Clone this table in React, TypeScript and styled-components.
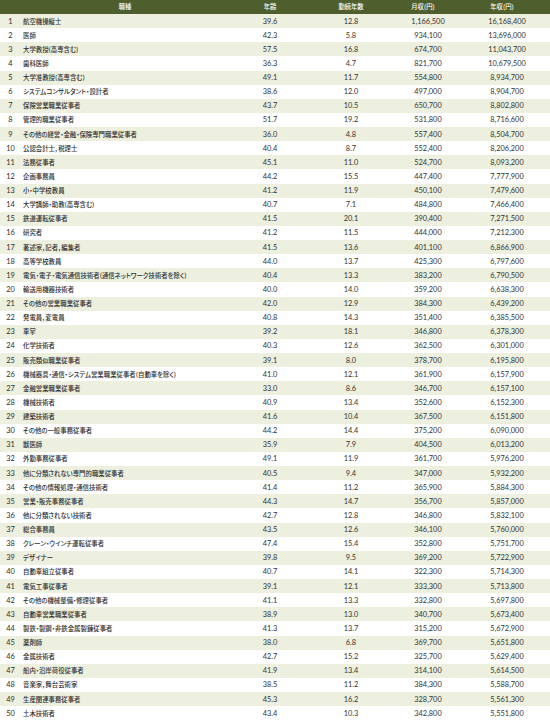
import React from "react";
import styled, { createGlobalStyle } from "styled-components";

const GlobalStyle = createGlobalStyle`
  html, body {
    margin: 0;
    padding: 0;
    background: #ffffff;
  }
  body {
    font-family: Lato, "Noto Sans CJK JP", sans-serif;
    color: #333333;
  }
`;

type Job = [string, string, string, string, string];

const jobs: Job[] = [
  ["航空機操縦士", "39.6", "12.8", "1,166,500", "16,168,400"],
  ["医師", "42.3", "5.8", "934,100", "13,696,000"],
  ["大学教授(高専含む)", "57.5", "16.8", "674,700", "11,043,700"],
  ["歯科医師", "36.3", "4.7", "821,700", "10,679,500"],
  ["大学准教授(高専含む)", "49.1", "11.7", "554,800", "8,934,700"],
  ["システムコンサルタント・設計者", "38.6", "12.0", "497,000", "8,904,700"],
  ["保険営業職業従事者", "43.7", "10.5", "650,700", "8,802,800"],
  ["管理的職業従事者", "51.7", "19.2", "531,800", "8,716,600"],
  ["その他の経営・金融・保険専門職業従事者", "36.0", "4.8", "557,400", "8,504,700"],
  ["公認会計士，税理士", "40.4", "8.7", "552,400", "8,206,200"],
  ["法務従事者", "45.1", "11.0", "524,700", "8,093,200"],
  ["企画事務員", "44.2", "15.5", "447,400", "7,777,900"],
  ["小・中学校教員", "41.2", "11.9", "450,100", "7,479,600"],
  ["大学講師・助教(高専含む)", "40.7", "7.1", "484,800", "7,466,400"],
  ["鉄道運転従事者", "41.5", "20.1", "390,400", "7,271,500"],
  ["研究者", "41.2", "11.5", "444,000", "7,212,300"],
  ["著述家，記者，編集者", "41.5", "13.6", "401,100", "6,866,900"],
  ["高等学校教員", "44.0", "13.7", "425,300", "6,797,600"],
  ["電気・電子・電気通信技術者(通信ネットワーク技術者を除く)", "40.4", "13.3", "383,200", "6,790,500"],
  ["輸送用機器技術者", "40.0", "14.0", "359,200", "6,638,300"],
  ["その他の営業職業従事者", "42.0", "12.9", "384,300", "6,439,200"],
  ["発電員，変電員", "40.8", "14.3", "351,400", "6,385,500"],
  ["車掌", "39.2", "18.1", "346,800", "6,378,300"],
  ["化学技術者", "40.3", "12.6", "362,500", "6,301,000"],
  ["販売類似職業従事者", "39.1", "8.0", "378,700", "6,195,800"],
  ["機械器具・通信・システム営業職業従事者(自動車を除く)", "41.0", "12.1", "361,900", "6,157,900"],
  ["金融営業職業従事者", "33.0", "8.6", "346,700", "6,157,100"],
  ["機械技術者", "40.9", "13.4", "352,600", "6,152,300"],
  ["建築技術者", "41.6", "10.4", "367,500", "6,151,800"],
  ["その他の一般事務従事者", "44.2", "14.4", "375,200", "6,090,000"],
  ["獣医師", "35.9", "7.9", "404,500", "6,013,200"],
  ["外勤事務従事者", "49.1", "11.9", "361,700", "5,976,200"],
  ["他に分類されない専門的職業従事者", "40.5", "9.4", "347,000", "5,932,200"],
  ["その他の情報処理・通信技術者", "41.4", "11.2", "365,900", "5,884,300"],
  ["営業・販売事務従事者", "44.3", "14.7", "356,700", "5,857,000"],
  ["他に分類されない技術者", "42.7", "12.8", "346,800", "5,832,100"],
  ["総合事務員", "43.5", "12.6", "346,100", "5,760,000"],
  ["クレーン・ウインチ運転従事者", "47.4", "15.4", "352,800", "5,751,700"],
  ["デザイナー", "39.8", "9.5", "369,200", "5,722,900"],
  ["自動車組立従事者", "40.7", "14.1", "322,300", "5,714,300"],
  ["電気工事従事者", "39.1", "12.1", "333,300", "5,713,800"],
  ["その他の機械整備・修理従事者", "41.1", "13.3", "332,800", "5,697,800"],
  ["自動車営業職業従事者", "38.9", "13.0", "340,700", "5,673,400"],
  ["製鉄・製鋼・非鉄金属製錬従事者", "41.3", "13.7", "315,200", "5,672,900"],
  ["薬剤師", "38.0", "6.8", "369,700", "5,651,800"],
  ["金属技術者", "42.7", "15.2", "325,700", "5,629,400"],
  ["船内・沿岸荷役従事者", "41.9", "13.4", "314,100", "5,614,500"],
  ["音楽家，舞台芸術家", "38.5", "11.2", "384,300", "5,588,700"],
  ["生産関連事務従事者", "45.3", "16.2", "328,700", "5,561,300"],
  ["土木技術者", "43.4", "10.3", "342,800", "5,551,800"],
];

const columns = "21px 209px 80px 82px 72px 86px";

const Table = styled.div`
  width: 550px;
  border-bottom: 1px solid #d4d6cc;
`;

const HeaderRow = styled.div`
  display: grid;
  grid-template-columns: ${columns};
  height: 14px;
  background: #4e5e2c;
  color: #ffffff;
  align-items: center;
`;

const HeadCell = styled.div<{ $span?: number; $shift?: number }>`
  grid-column: span ${(p) => p.$span ?? 1};
  text-align: center;
  font-family: "Noto Sans CJK JP", sans-serif;
  font-weight: 500;
  font-feature-settings: "palt";
  font-size: 6.3px;
  line-height: 14px;
  padding-left: ${(p) => (p.$shift && p.$shift > 0 ? p.$shift : 0)}px;
  padding-right: ${(p) => (p.$shift && p.$shift < 0 ? -p.$shift : 0)}px;
`;

const Row = styled.div<{ $tinted: boolean }>`
  display: grid;
  grid-template-columns: ${columns};
  height: 14.14px;
  align-items: center;
  background: ${(p) => (p.$tinted ? "#edf0df" : "#ffffff")};
`;

const RankCell = styled.div`
  text-align: center;
  font-family: Lato, sans-serif;
  font-size: 7.4px;
  color: #2e2e2e;
`;

const NameCell = styled.div`
  padding-left: 2px;
  font-family: "Noto Sans CJK JP", sans-serif;
  font-weight: 500;
  font-feature-settings: "palt";
  font-size: 6.4px;
  color: #2e2e2e;
  white-space: nowrap;
`;

const NumCell = styled.div`
  text-align: center;
  font-family: Lato, sans-serif;
  font-size: 7.4px;
  color: #333333;
`;

const App: React.FC = () => {
  return (
    <>
      <GlobalStyle />
      <Table>
        <HeaderRow>
          <HeadCell $span={2} $shift={20}>
            職種
          </HeadCell>
          <HeadCell>年齢</HeadCell>
          <HeadCell>勤続年数</HeadCell>
          <HeadCell $shift={-10}>月収(円)</HeadCell>
          <HeadCell $shift={-10}>年収(円)</HeadCell>
        </HeaderRow>
        {jobs.map((job, i) => (
          <Row key={job[0]} $tinted={i % 2 === 0}>
            <RankCell>{i + 1}</RankCell>
            <NameCell>{job[0]}</NameCell>
            <NumCell>{job[1]}</NumCell>
            <NumCell>{job[2]}</NumCell>
            <NumCell>{job[3]}</NumCell>
            <NumCell>{job[4]}</NumCell>
          </Row>
        ))}
      </Table>
    </>
  );
};

export default App;
